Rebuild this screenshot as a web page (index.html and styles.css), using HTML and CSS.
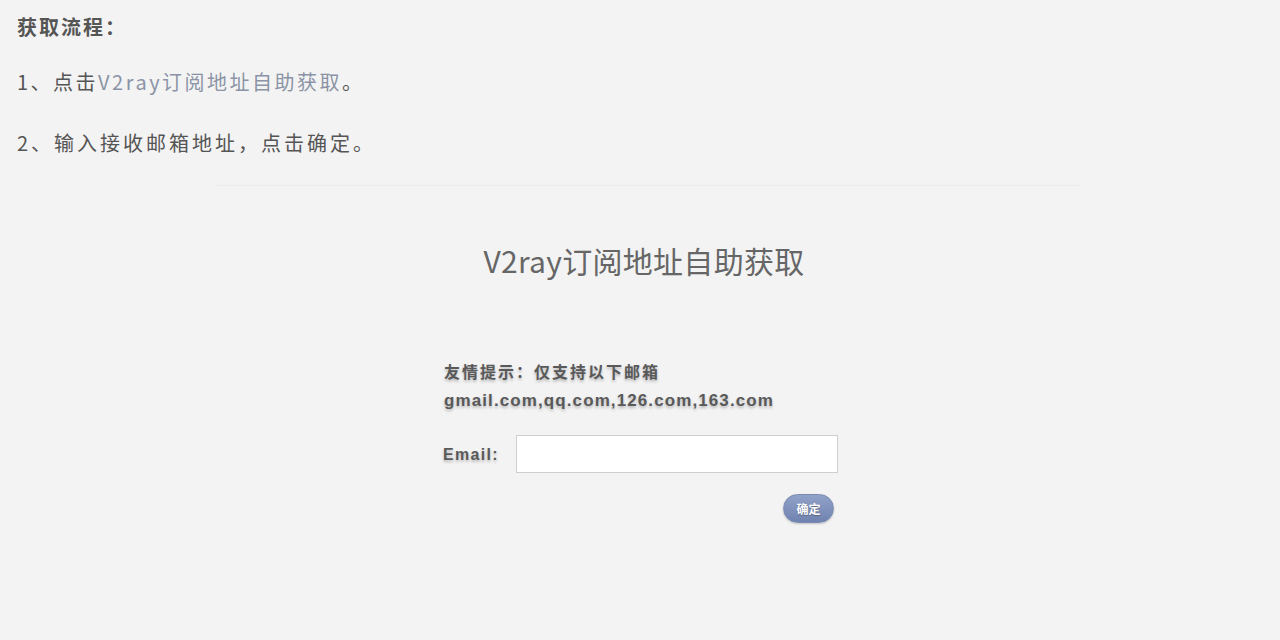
FILE: index.html
```html
<!DOCTYPE html>
<html lang="zh-CN">
<head>
<meta charset="utf-8">
<title>V2ray订阅地址自助获取</title>
<link rel="stylesheet" href="styles.css">
</head>
<body>
<div class="intro">
  <p class="intro-title">获取流程：</p>
  <p class="intro-step step-1">1、点击<a class="intro-link" href="#">V2ray订阅地址自助获取</a>。</p>
  <p class="intro-step step-2">2、输入接收邮箱地址，点击确定。</p>
</div>
<hr class="divider">
<h1 class="title">V2ray订阅地址自助获取</h1>
<div class="form-wrap">
  <form class="form">
    <p class="tip tip-cn">友情提示：仅支持以下邮箱</p>
    <p class="tip tip-mail">gmail.com,qq.com,126.com,163.com</p>
    <div class="row">
      <label class="label" for="email">Email:</label>
      <input class="input" id="email" type="text">
    </div>
    <div class="actions">
      <button class="btn" type="button">确定</button>
    </div>
  </form>
</div>
</body>
</html>
```
FILE: styles.css
```css
html, body {
  margin: 0;
  padding: 0;
  background: #f3f3f3;
}
body {
  font-family: "Noto Sans CJK SC", "Noto Sans", sans-serif;
  color: #555;
  height: 640px;
}
.intro {
  padding: 12px 17px 0;
}
.intro p {
  margin: 0;
}
.intro-title {
  font-size: 20px;
  font-weight: bold;
  line-height: 30px;
  letter-spacing: 2px;
}
.intro-step {
  font-size: 20px;
  line-height: 30px;
}
.step-1 {
  margin-top: 25px !important;
  letter-spacing: 2.5px;
}
.step-2 {
  margin-top: 31px !important;
  letter-spacing: 3px;
}
.intro-link {
  color: #8b93a6;
  text-decoration: none;
}
.divider {
  border: 0;
  height: 1px;
  background: #ebebeb;
  width: 865px;
  margin: 27px auto 0 215px;
}
.title {
  margin: 50px 0 0;
  text-align: center;
  font-size: 30px;
  font-weight: normal;
  color: #666;
  line-height: 48px;
  padding-left: 8px;
  letter-spacing: 0.3px;
}
.form-wrap {
  display: flex;
  justify-content: center;
  padding-top: 75px;
}
.form {
  width: 396px;
  margin-left: 2px;
}
.tip {
  margin: 0;
  font-family: "Liberation Sans", "Noto Sans CJK SC", sans-serif;
  font-weight: bold;
  line-height: 28px;
  color: #595959;
  text-shadow: 0 2px 3px rgba(0, 0, 0, 0.25);
  padding-left: 1px;
}
.tip-cn {
  font-size: 16px;
  letter-spacing: 2px;
}
.tip-mail {
  font-size: 17px;
  letter-spacing: 1.1px;
  margin-top: 0;
}
.row {
  display: flex;
  align-items: center;
  margin-top: 20px;
}
.label {
  width: 73px;
  font-family: "Liberation Sans", sans-serif;
  font-weight: bold;
  font-size: 16px;
  letter-spacing: 1.3px;
  color: #595959;
  text-shadow: 0 2px 3px rgba(0, 0, 0, 0.25);
  padding-top: 2px;
}
.input {
  box-sizing: border-box;
  width: 322px;
  height: 38px;
  border: 1px solid #cfcfcf;
  background: #fff;
  margin: 0;
  padding: 0 6px;
  font-size: 16px;
}
.actions {
  display: flex;
  justify-content: flex-end;
  margin-top: 21px;
  padding-right: 5px;
}
.btn {
  width: 51px;
  height: 29px;
  border: 1px solid #7a8bb4;
  border-radius: 15px;
  background: linear-gradient(#91a2c8, #7083b0);
  color: #fff;
  font-family: "Noto Sans CJK SC", sans-serif;
  font-weight: bold;
  font-size: 12px;
  padding: 0;
  box-shadow: 0 1px 2px rgba(0, 0, 0, 0.2);
  text-shadow: 0 1px 1px rgba(0, 0, 0, 0.3);
}
```
